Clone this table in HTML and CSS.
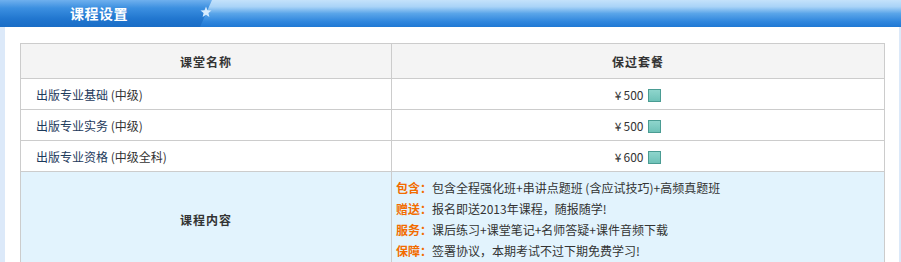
FILE: index.html
```html
<!DOCTYPE html>
<html lang="zh-CN">
<head>
<meta charset="utf-8">
<title>课程设置</title>
<link rel="stylesheet" href="styles.css">
</head>
<body>
<div class="page">
  <div class="bar">
    <div class="bar-left"><span class="bar-title">课程设置</span></div>
    <svg class="star" width="12" height="12" viewBox="0 0 12 12"><polygon points="6,0.5 7.5,4.3 11.5,4.5 8.4,7 9.4,11 6,8.8 2.6,11 3.6,7 0.5,4.5 4.5,4.3" fill="#d6ecff"/></svg>
  </div>
  <div class="body">
    <table class="course">
      <colgroup><col class="c1"><col class="c2"></colgroup>
      <thead>
        <tr><th>课堂名称</th><th>保过套餐</th></tr>
      </thead>
      <tbody>
        <tr><td class="name"><a href="#">出版专业基础</a> (中级)</td><td class="price"><span class="yen">¥</span>500 <span class="chk"></span></td></tr>
        <tr><td class="name"><a href="#">出版专业实务</a> (中级)</td><td class="price"><span class="yen">¥</span>500 <span class="chk"></span></td></tr>
        <tr><td class="name"><a href="#">出版专业资格</a> (中级全科)</td><td class="price"><span class="yen">¥</span>600 <span class="chk"></span></td></tr>
        <tr class="content">
          <th>课程内容</th>
          <td class="detail">
            <p><b>包含：</b>包含全程强化班+串讲点题班 (含应试技巧)+高频真题班</p>
            <p><b>赠送：</b>报名即送2013年课程，随报随学!</p>
            <p><b>服务：</b>课后练习+课堂笔记+名师答疑+课件音频下载</p>
            <p><b>保障：</b>签署协议，本期考试不过下期免费学习!</p>
          </td>
        </tr>
      </tbody>
    </table>
  </div>
</div>
</body>
</html>
```

FILE: styles.css
```css
html, body {
  margin: 0;
  padding: 0;
  background: #ffffff;
}
body {
  font-family: "Noto Sans CJK SC", "Noto Sans", sans-serif;
  font-size: 12px;
  color: #333333;
}
.page {
  width: 901px;
  overflow: hidden;
}
.bar {
  position: relative;
  height: 27px;
  background: linear-gradient(to bottom, #c4e2fb 0%, #a9d3f7 25%, #5aa5e9 50%, #2f86dd 80%, #1f78d4 100%);
}
.bar-left {
  height: 27px;
  width: 212px;
  clip-path: polygon(0 0, 212px 0, 200px 27px, 0 27px);
  background: linear-gradient(to bottom, #6fb0ee 0%, #3b8fe0 30%, #2176cf 70%, #1a6dc6 100%);
  display: flex;
  align-items: center;
}
.bar-title {
  margin-left: 70px;
  color: #ffffff;
  font-size: 14px;
  font-weight: bold;
  letter-spacing: 0.5px;
  line-height: 27px;
}
.star {
  position: absolute;
  left: 200px;
  top: 6px;
}
.body {
  border-left: 5px solid #dce9f9;
  border-right: 2px solid #dce9f9;
  padding: 16px 13px 0 15px;
  background: #ffffff;
}
.course {
  border-collapse: collapse;
  width: 864px;
  table-layout: fixed;
}
.c1 { width: 371px; }
.c2 { width: 493px; }
.course th, .course td {
  border: 1px solid #cccccc;
  padding: 0;
}
.course thead th {
  height: 34px;
  background: #f4f4f4;
  font-weight: bold;
  color: #333333;
  text-align: center;
  letter-spacing: 1px;
}
.course tbody td {
  height: 30px;
}
.name {
  padding-left: 15px !important;
  color: #333333;
}
.name a {
  color: #1d3a5c;
  text-decoration: none;
}
.price {
  text-align: center;
  color: #333333;
}
.yen {
  margin-right: 2px;
}
.chk {
  display: inline-block;
  width: 11px;
  height: 11px;
  border: 1px solid #4a9c93;
  background: linear-gradient(to bottom, #8ed5cc, #6fc2b8);
  vertical-align: -2px;
  margin-left: 2px;
}
.content th, .content td {
  background: #e2f3fd;
}
.content th {
  font-weight: bold;
  text-align: center;
  letter-spacing: 1px;
  color: #333333;
}
.detail {
  padding: 5px 4px 5px 4px !important;
  height: auto !important;
}
.detail p {
  margin: 0;
  line-height: 21px;
}
.detail b {
  color: #f26c00;
  font-weight: bold;
}
```
